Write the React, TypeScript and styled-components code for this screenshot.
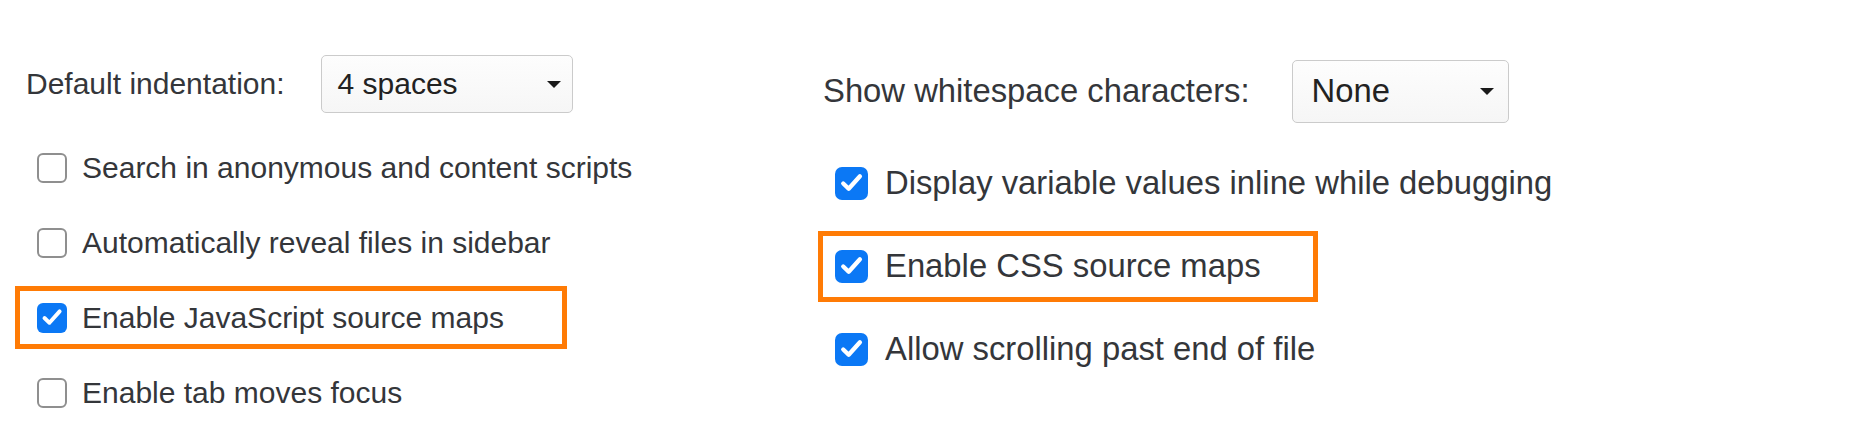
import React from "react";
import styled, { createGlobalStyle } from "styled-components";

const Global = createGlobalStyle`
  html, body { margin: 0; padding: 0; background: #ffffff; }
  body { font-family: "Liberation Sans", Arial, sans-serif; color: #34363a; }
`;

const Page = styled.div`
  display: flex;
  width: 1870px;
  height: 434px;
  background: #fff;
  overflow: hidden;
`;

const Column = styled.div<{ $width?: number; $top: number; $fs: number }>`
  display: flex;
  flex-direction: column;
  box-sizing: border-box;
  ${(p) => (p.$width ? `width: ${p.$width}px;` : "flex: 1;")}
  padding-top: ${(p) => p.$top}px;
  padding-left: ${(p) => (p.$width ? 15 : 0)}px;
  font-size: ${(p) => p.$fs}px;
`;

const SelectRow = styled.div<{ $gap: number; $indent: number; $after: number }>`
  display: flex;
  align-items: center;
  gap: ${(p) => p.$gap}px;
  padding-left: ${(p) => p.$indent}px;
  margin-bottom: ${(p) => p.$after}px;
`;

const Label = styled.span`
  white-space: nowrap;
  line-height: 1;
`;

const SelectBox = styled.div<{ $w: number; $h: number; $pl: number; $pr: number }>`
  display: flex;
  align-items: center;
  justify-content: space-between;
  box-sizing: border-box;
  width: ${(p) => p.$w}px;
  height: ${(p) => p.$h}px;
  padding: 0 ${(p) => p.$pr}px 0 ${(p) => p.$pl}px;
  border: 1px solid #cbcbcb;
  border-radius: 5px;
  background: linear-gradient(#fdfdfd, #f6f6f6);
  color: #222;
  line-height: 1;
`;

const Arrow = styled.span<{ $w: number }>`
  width: 0;
  height: 0;
  border-left: ${(p) => p.$w / 2}px solid transparent;
  border-right: ${(p) => p.$w / 2}px solid transparent;
  border-top: ${(p) => Math.round(p.$w * 0.5)}px solid #1a1a1a;
`;

const List = styled.div<{ $gap: number }>`
  display: flex;
  flex-direction: column;
  gap: ${(p) => p.$gap}px;
`;

const Item = styled.div<{ $hl?: boolean; $h: number; $pl: number; $pr: number; $gap: number }>`
  display: flex;
  align-items: center;
  gap: ${(p) => p.$gap}px;
  width: fit-content;
  box-sizing: border-box;
  height: ${(p) => p.$h}px;
  padding: 0 ${(p) => p.$pr}px 0 ${(p) => p.$pl}px;
  border: 5px solid ${(p) => (p.$hl ? "#ff7b05" : "transparent")};
  white-space: nowrap;
  line-height: 1;
`;

const Box = styled.span<{ $checked?: boolean; $size: number }>`
  display: inline-flex;
  align-items: center;
  justify-content: center;
  flex: none;
  box-sizing: border-box;
  width: ${(p) => p.$size}px;
  height: ${(p) => p.$size}px;
  border-radius: ${(p) => Math.round(p.$size * 0.2)}px;
  background: ${(p) => (p.$checked ? "#0b78f5" : "#ffffff")};
  border: ${(p) => (p.$checked ? "none" : "2px solid #8f8f8f")};
`;

type Scale = {
  fs: number;
  box: number;
  itemH: number;
  itemGap: number;
  textGap: number;
  pl: number;
  pr: number;
};

const Check: React.FC<{ checked?: boolean; s: Scale; hl?: boolean; children: React.ReactNode }> = ({
  checked,
  s,
  hl,
  children,
}) => (
  <Item $hl={hl} $h={s.itemH} $pl={s.pl} $pr={s.pr} $gap={s.textGap}>
    <Box $checked={checked} $size={s.box}>
      {checked && (
        <svg width={s.box} height={s.box} viewBox="0 0 20 20">
          <path
            d="M5 10 L8.3 13.2 L15.1 5.6"
            fill="none"
            stroke="#fff"
            strokeWidth={2.6}
            strokeLinecap="round"
            strokeLinejoin="round"
          />
        </svg>
      )}
    </Box>
    <span>{children}</span>
  </Item>
);

const left: Scale = { fs: 30, box: 30, itemH: 63, itemGap: 12, textGap: 15, pl: 17, pr: 58 };
const right: Scale = { fs: 32.8, box: 33, itemH: 71, itemGap: 12, textGap: 17, pl: 12, pr: 52 };

export default function App() {
  return (
    <>
      <Global />
      <Page>
        <Column $width={818} $top={55} $fs={left.fs}>
          <SelectRow $gap={36} $indent={11} $after={23}>
            <Label>Default indentation:</Label>
            <SelectBox $w={252} $h={58} $pl={16} $pr={11}>
              <span>4 spaces</span>
              <Arrow $w={14} />
            </SelectBox>
          </SelectRow>
          <List $gap={left.itemGap}>
            <Check s={left}>Search in anonymous and content scripts</Check>
            <Check s={left}>Automatically reveal files in sidebar</Check>
            <Check s={left} checked hl>
              Enable JavaScript source maps
            </Check>
            <Check s={left}>Enable tab moves focus</Check>
          </List>
        </Column>
        <Column $top={60} $fs={right.fs}>
          <SelectRow $gap={42} $indent={5} $after={25}>
            <Label>Show whitespace characters:</Label>
            <SelectBox $w={217} $h={63} $pl={19} $pr={14}>
              <span>None</span>
              <Arrow $w={14} />
            </SelectBox>
          </SelectRow>
          <List $gap={right.itemGap}>
            <Check s={right} checked>
              Display variable values inline while debugging
            </Check>
            <Check s={right} checked hl>
              Enable CSS source maps
            </Check>
            <Check s={right} checked>
              Allow scrolling past end of file
            </Check>
          </List>
        </Column>
      </Page>
    </>
  );
}
